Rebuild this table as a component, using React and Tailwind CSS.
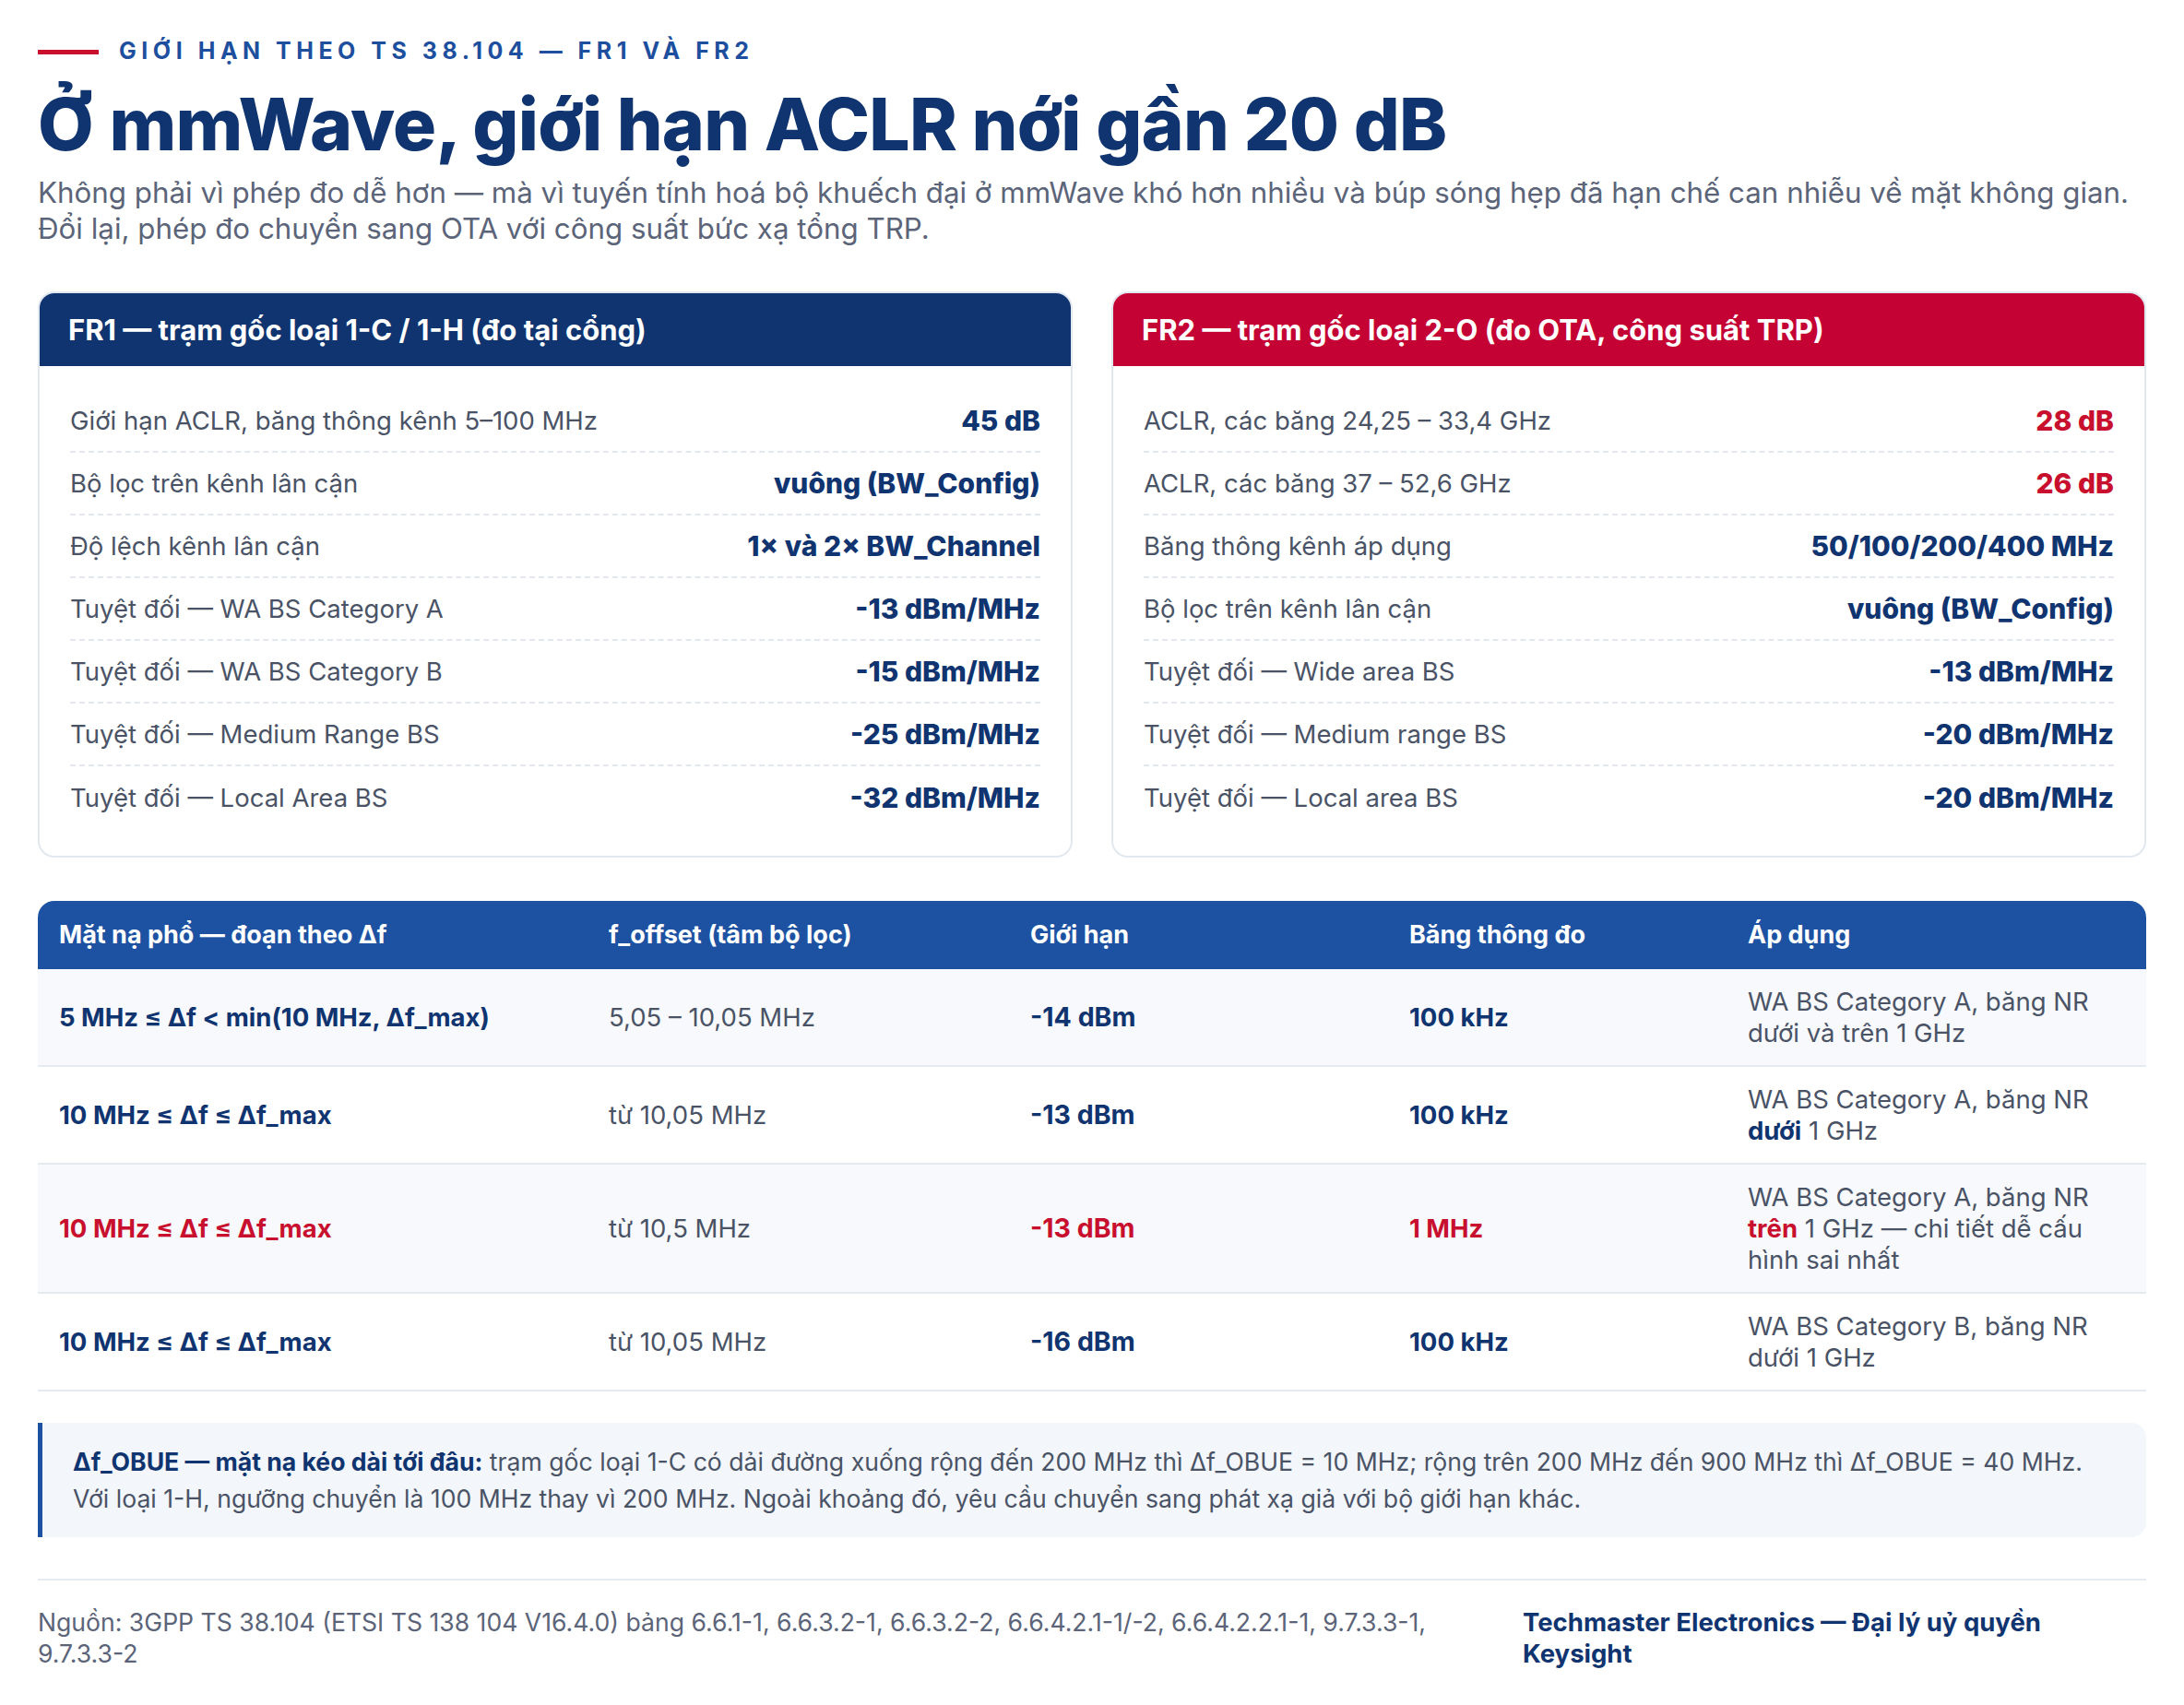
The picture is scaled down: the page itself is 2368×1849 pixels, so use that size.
import React from "react";

const fr1 = [
  ["Giới hạn ACLR, băng thông kênh 5–100 MHz", "45 dB"],
  ["Bộ lọc trên kênh lân cận", "vuông (BW_Config)"],
  ["Độ lệch kênh lân cận", "1× và 2× BW_Channel"],
  ["Tuyệt đối — WA BS Category A", "-13 dBm/MHz"],
  ["Tuyệt đối — WA BS Category B", "-15 dBm/MHz"],
  ["Tuyệt đối — Medium Range BS", "-25 dBm/MHz"],
  ["Tuyệt đối — Local Area BS", "-32 dBm/MHz"],
];

const fr2 = [
  ["ACLR, các băng 24,25 – 33,4 GHz", "28 dB", true],
  ["ACLR, các băng 37 – 52,6 GHz", "26 dB", true],
  ["Băng thông kênh áp dụng", "50/100/200/400 MHz"],
  ["Bộ lọc trên kênh lân cận", "vuông (BW_Config)"],
  ["Tuyệt đối — Wide area BS", "-13 dBm/MHz"],
  ["Tuyệt đối — Medium range BS", "-20 dBm/MHz"],
  ["Tuyệt đối — Local area BS", "-20 dBm/MHz"],
];

function SpecCard({ title, headerClass, rows }) {
  return (
    <div className="rounded-[18px] border-2 border-[#e2e8f0] bg-white overflow-hidden">
      <div className={`h-[79px] px-[31px] flex items-center text-white text-[31px] font-bold ${headerClass}`}>
        {title}
      </div>
      <div className="px-[33px] pt-[26px] pb-[29px]">
        {rows.map(([label, value, red], i) => (
          <div
            key={label}
            className={`h-[68px] flex items-center justify-between ${
              i < rows.length - 1 ? "border-b-2 border-dashed border-[#e3e8f0]" : ""
            }`}
          >
            <span className="text-[27.5px] text-[#4a5366]">{label}</span>
            <span className={`text-[30px] font-extrabold ${red ? "text-[#c8102e]" : "text-[#0f3470]"}`}>{value}</span>
          </div>
        ))}
      </div>
    </div>
  );
}

const maskRows = [
  {
    range: "5 MHz ≤ Δf < min(10 MHz, Δf_max)",
    offset: "5,05 – 10,05 MHz",
    limit: "-14 dBm",
    bw: "100 kHz",
    apply: [<>WA BS Category A, băng NR</>, <>dưới và trên 1 GHz</>],
    shade: true,
  },
  {
    range: "10 MHz ≤ Δf ≤ Δf_max",
    offset: "từ 10,05 MHz",
    limit: "-13 dBm",
    bw: "100 kHz",
    apply: [<>WA BS Category A, băng NR</>, <><b className="font-bold text-[#0f3470]">dưới</b> 1 GHz</>],
  },
  {
    range: "10 MHz ≤ Δf ≤ Δf_max",
    offset: "từ 10,5 MHz",
    limit: "-13 dBm",
    bw: "1 MHz",
    apply: [
      <>WA BS Category A, băng NR</>,
      <><b className="font-bold text-[#c8102e]">trên</b> 1 GHz — chi tiết dễ cấu</>,
      <>hình sai nhất</>,
    ],
    red: true,
    shade: true,
  },
  {
    range: "10 MHz ≤ Δf ≤ Δf_max",
    offset: "từ 10,05 MHz",
    limit: "-16 dBm",
    bw: "100 kHz",
    apply: [<>WA BS Category B, băng NR</>, <>dưới 1 GHz</>],
  },
];

export default function App() {
  return (
    <div className="min-h-screen bg-white px-[41px] pt-[38px] pb-[40px] font-['Inter','Noto_Sans',sans-serif] text-[#0f3470]">
      {/* Eyebrow */}
      <div className="flex items-center gap-[22px] h-[36px]">
        <span className="w-[66px] h-[5px] bg-[#c8102e]" />
        <span className="text-[25px] font-bold tracking-[0.22em] text-[#1d4f9e]">
          GIỚI HẠN THEO TS 38.104 — FR1 VÀ FR2
        </span>
      </div>

      <h1 className="mt-[18px] text-[78.5px] leading-[1.1] font-extrabold tracking-[-0.01em] text-[#0f3470]">
        Ở mmWave, giới hạn ACLR nới gần 20 dB
      </h1>
      <p className="mt-[12px] text-[31.3px] leading-[39px] text-[#5b6478]">
        Không phải vì phép đo dễ hơn — mà vì tuyến tính hoá bộ khuếch đại ở mmWave khó hơn nhiều và búp sóng hẹp đã hạn chế can nhiễu về mặt không gian.
        <br />
        Đổi lại, phép đo chuyển sang OTA với công suất bức xạ tổng TRP.
      </p>

      {/* Cards */}
      <div className="mt-[48px] grid grid-cols-2 gap-[42px]">
        <SpecCard title="FR1 — trạm gốc loại 1-C / 1-H (đo tại cổng)" headerClass="bg-[#0f3470]" rows={fr1} />
        <SpecCard title="FR2 — trạm gốc loại 2-O (đo OTA, công suất TRP)" headerClass="bg-[#c40233]" rows={fr2} />
      </div>

      {/* Mask table */}
      <div className="mt-[47px] rounded-t-[18px] overflow-hidden">
        <table className="w-full table-fixed border-collapse">
          <colgroup>
            <col className="w-[596px]" />
            <col className="w-[457px]" />
            <col className="w-[411px]" />
            <col className="w-[367px]" />
            <col />
          </colgroup>
          <thead>
            <tr className="bg-[#1d52a3] text-white text-[27px] font-bold text-left h-[74px]">
              <th className="px-[23px] font-bold">Mặt nạ phổ — đoạn theo Δf</th>
              <th className="px-[23px] font-bold">f_offset (tâm bộ lọc)</th>
              <th className="px-[23px] font-bold">Giới hạn</th>
              <th className="px-[23px] font-bold">Băng thông đo</th>
              <th className="px-[23px] font-bold">Áp dụng</th>
            </tr>
          </thead>
          <tbody>
            {maskRows.map((r, i) => {
              const strong = r.red ? "text-[#c8102e]" : "text-[#0f3470]";
              return (
                <tr key={i} className={`border-b-2 border-[#e6ebf2] ${r.shade ? "bg-[#f7f9fc]" : "bg-white"}`}>
                  <td className={`px-[23px] py-[18px] text-[27.5px] font-bold ${strong}`}>{r.range}</td>
                  <td className="px-[23px] py-[18px] text-[27.5px] text-[#4a5366]">{r.offset}</td>
                  <td className={`px-[23px] py-[18px] text-[28.5px] font-bold ${strong}`}>{r.limit}</td>
                  <td className={`px-[23px] py-[18px] text-[27.5px] font-bold ${strong}`}>{r.bw}</td>
                  <td className="px-[23px] py-[18px] text-[27.5px] leading-[34px] text-[#4a5366]">
                    {r.apply.map((line, j) => (
                      <span key={j} className="block whitespace-nowrap">
                        {line}
                      </span>
                    ))}
                  </td>
                </tr>
              );
            })}
          </tbody>
        </table>
      </div>

      {/* Note */}
      <div className="mt-[34px] border-l-[5px] border-[#1d52a3] bg-[#f3f6fa] rounded-r-[16px] pl-[33px] pr-[30px] py-[22px] text-[26.6px] leading-[40px] text-[#4a5366]">
        <b className="font-bold text-[#0f3470]">Δf_OBUE — mặt nạ kéo dài tới đâu:</b> trạm gốc loại 1-C có dải đường xuống rộng đến 200 MHz thì Δf_OBUE = 10 MHz; rộng trên 200 MHz đến 900 MHz thì Δf_OBUE = 40 MHz.
        <br />
        Với loại 1-H, ngưỡng chuyển là 100 MHz thay vì 200 MHz. Ngoài khoảng đó, yêu cầu chuyển sang phát xạ giả với bộ giới hạn khác.
      </div>

      {/* Footer */}
      <div className="mt-[45px] border-t-2 border-[#e6ebf2] pt-[28px] flex justify-between gap-[50px]">
        <p className="w-[1560px] text-[26.6px] leading-[34px] text-[#5b6478]">
          Nguồn: 3GPP TS 38.104 (ETSI TS 138 104 V16.4.0) bảng 6.6.1-1, 6.6.3.2-1, 6.6.3.2-2, 6.6.4.2.1-1/-2, 6.6.4.2.2.1-1, 9.7.3.3-1,
          <br />
          9.7.3.3-2
        </p>
        <p className="w-[676px] text-[27.5px] leading-[34px] font-bold text-[#0f3470]">
          Techmaster Electronics — Đại lý uỷ quyền
          <br />
          Keysight
        </p>
      </div>
    </div>
  );
}
